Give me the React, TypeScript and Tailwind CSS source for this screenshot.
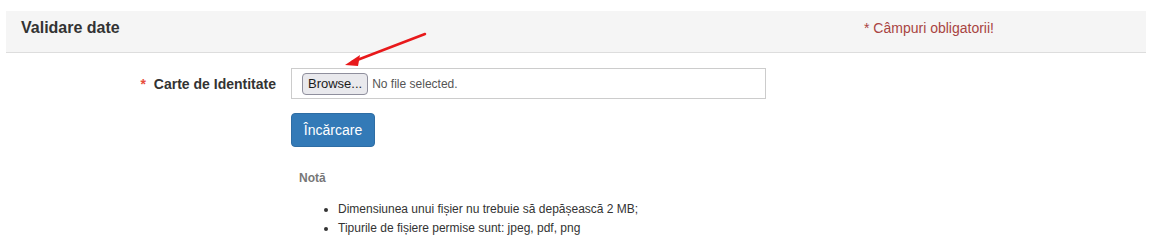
import React from 'react';

export default function App() {
  return (
    <div className="w-[1174px] h-[252px] bg-white relative text-[#333] overflow-hidden" style={{ fontFamily: '"Liberation Sans", Arial, sans-serif' }}>
      <div className="ml-[6px] mr-[28px] mt-[11px] h-[42px] bg-[#f5f5f5] border-b border-[#dddddd] flex items-start pt-[9px]">
        <h3 className="pl-[15px] w-[858px] text-[16px] font-bold text-[#333] leading-[16px]">Validare date</h3>
        <span className="text-[14px] text-[#a94442] leading-[16px]">* Câmpuri obligatorii!</span>
      </div>

      <div className="flex items-center mt-[15px]">
        <label className="w-[276px] text-right text-[14px] font-bold text-[#333] mt-[1px]">
          <span className="text-[#e74c3c] mr-[8px]">*</span>Carte de Identitate
        </label>
        <div className="ml-[15px] w-[475px] h-[31px] border border-[#cccccc] flex items-center pl-[10px]">
          <span className="h-[22px] px-[5px] border border-[#8f8f9d] rounded-[4px] bg-[#e9e9ed] text-[13px] text-[#1b1b1b] flex items-center">Browse...</span>
          <span className="ml-[4px] text-[12px] text-[#555]">No file selected.</span>
        </div>
      </div>

      <div className="ml-[291px] mt-[14px]">
        <button className="w-[84px] h-[34px] bg-[#337ab7] border border-[#2e6da4] rounded-[4px] text-white text-[14px]">Încărcare</button>
      </div>

      <div className="ml-[299px] mt-[22px] text-[12px] font-bold text-[#777]">Notă</div>
      <ul className="ml-[338px] mt-[13px] list-disc text-[12px] text-[#333] leading-[19px]">
        <li>Dimensiunea unui fișier nu trebuie să depășească 2 MB;</li>
        <li>Tipurile de fișiere permise sunt: jpeg, pdf, png</li>
      </ul>

      <svg className="absolute left-0 top-0" width="1174" height="252">
        <line x1="425" y1="34" x2="352" y2="62" stroke="#e8191b" strokeWidth="2.5" strokeLinecap="round" />
        <polygon points="345,65 360,55 358,66" fill="#e8191b" />
      </svg>
    </div>
  );
}
